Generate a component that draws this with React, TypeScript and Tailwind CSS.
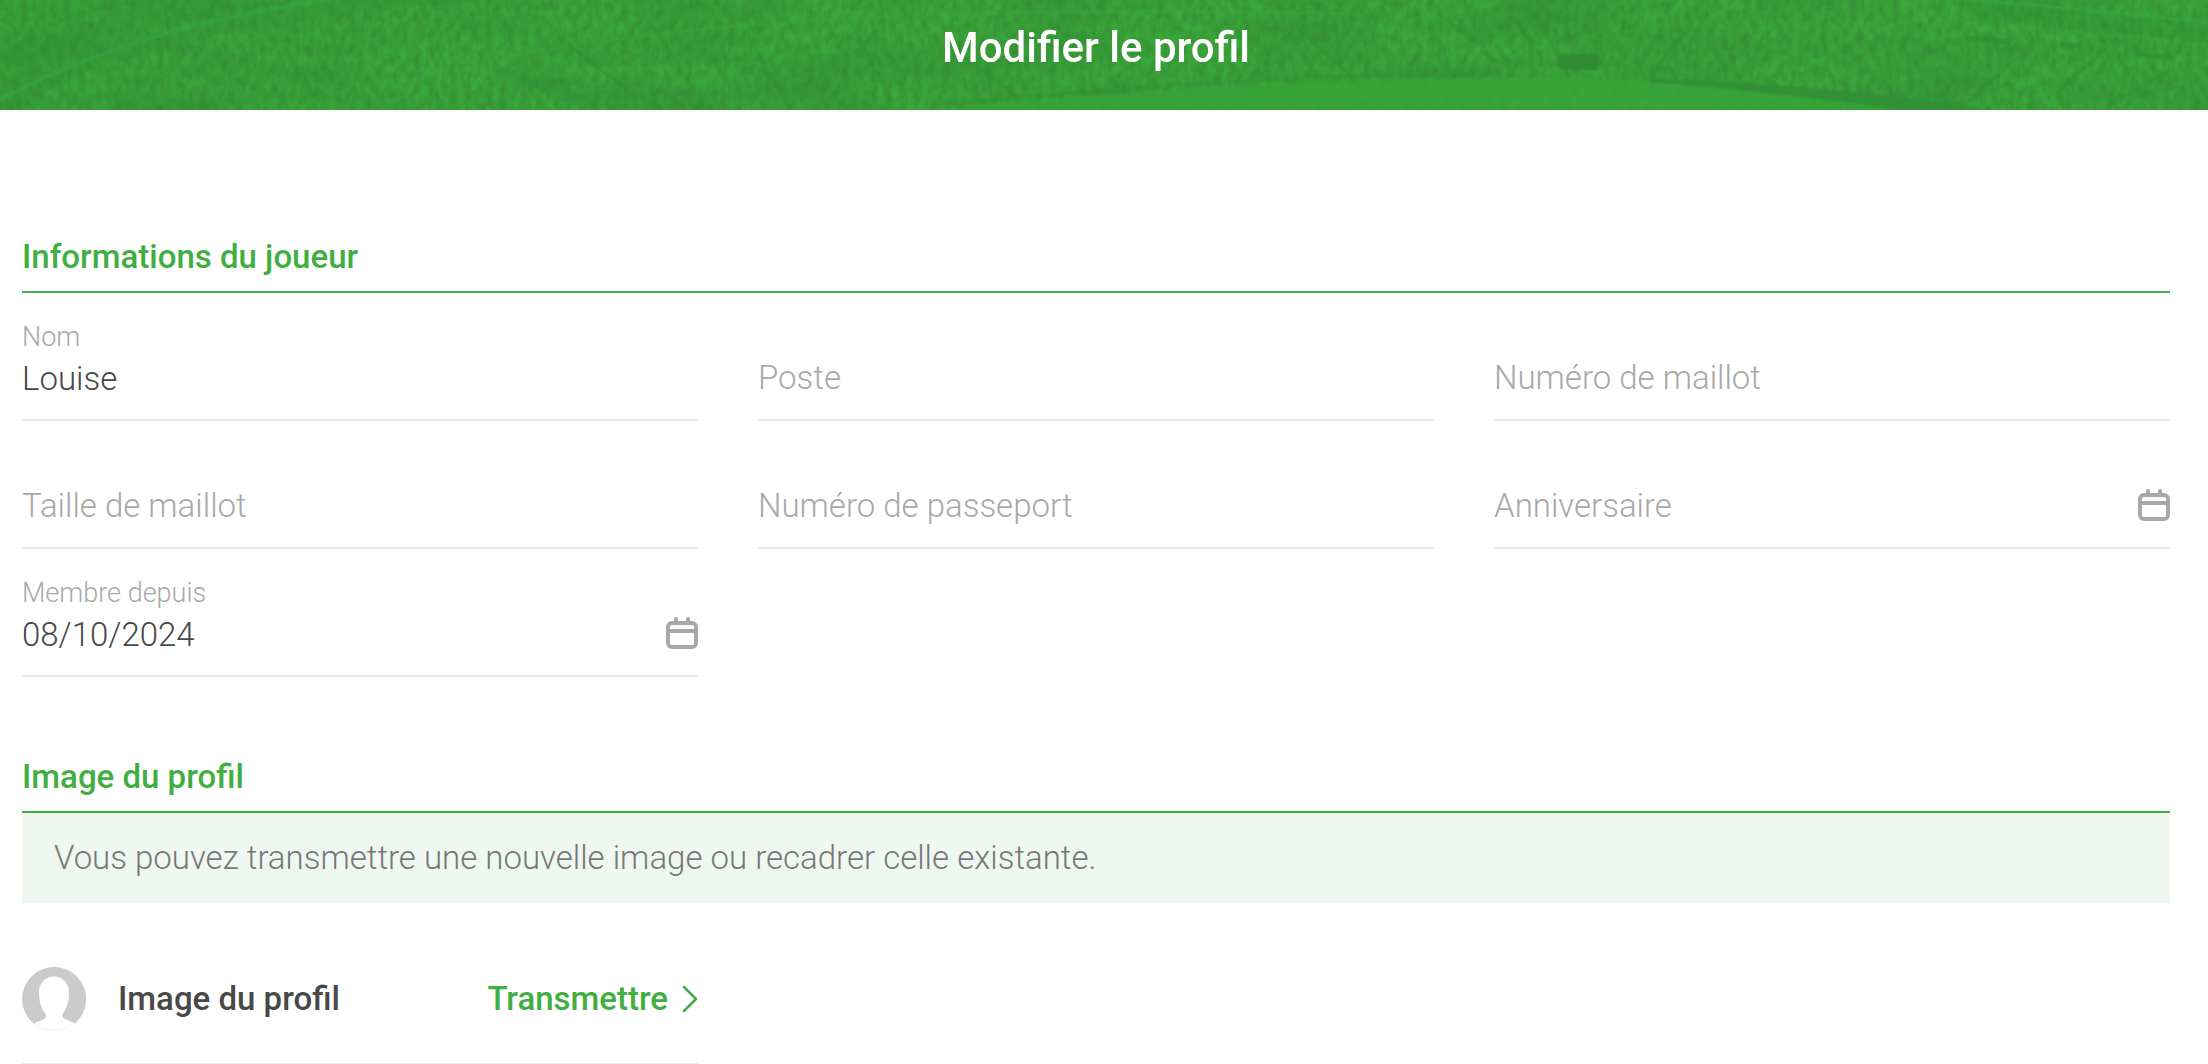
import { useState, type ReactNode } from 'react';

const textFields = [
  { id: 'nom', label: 'Nom', value: 'Louise' },
  { id: 'poste', label: 'Poste', value: '' },
  { id: 'numero', label: 'Numéro de maillot', value: '' },
  { id: 'taille', label: 'Taille de maillot', value: '' },
  { id: 'passeport', label: 'Numéro de passeport', value: '' },
  { id: 'anniversaire', label: 'Anniversaire', value: '', date: true },
  { id: 'membre', label: 'Membre depuis', value: '08/10/2024', date: true },
];

function CalendarIcon() {
  return (
    <svg viewBox="0 0 32 32" className="size-8" fill="none" stroke="currentColor" strokeWidth="4" aria-hidden="true">
      <rect x="2" y="6" width="28" height="24" rx="4" />
      <path d="M2 14h28" />
      <path d="M10 6V2M22 6V2" strokeLinecap="round" />
    </svg>
  );
}

function Avatar() {
  return (
    <svg viewBox="0 0 64 64" className="size-16 shrink-0" aria-hidden="true">
      <circle cx="32" cy="32" r="31.5" fill="#fff" stroke="#f1f1f1" />
      <path
        fill="#cbcbcb"
        d="M11.500 56.500A32 32 0 1 1 53 56.300L42 51.500C40 50.500 40 48 41.500 45.500C45.500 40 47 33 47 25C47 16 40.500 9.500 32 9.500S17 16 17 25C17 33 18.500 40 22.500 45.500C24.500 48 24.500 50.500 22.500 51.700Z"
      />
    </svg>
  );
}

// Stadium stands and pitch behind the page title
function StadiumBackground() {
  return (
    <svg viewBox="0 0 2208 110" preserveAspectRatio="xMidYMax slice" className="absolute inset-0 size-full" aria-hidden="true">
      <defs>
        <filter id="crowd" x="0" y="0" width="100%" height="100%" colorInterpolationFilters="sRGB">
          <feTurbulence type="fractalNoise" baseFrequency="0.14 0.09" numOctaves="2" seed="4" />
          <feColorMatrix values="0 0 0 0 0.2  0 0 0 0 0.53  0 0 0 0 0.2  1.4 0 0 0 -0.42" />
        </filter>
        <filter id="patches" x="0" y="0" width="100%" height="100%" colorInterpolationFilters="sRGB">
          <feTurbulence type="fractalNoise" baseFrequency="0.008 0.025" numOctaves="2" seed="9" />
          <feColorMatrix values="0 0 0 0 0.2  0 0 0 0 0.55  0 0 0 0 0.2  1.3 0 0 0 -0.5" />
        </filter>
        <filter id="soft" x="-5%" y="-20%" width="110%" height="140%" colorInterpolationFilters="sRGB">
          <feGaussianBlur stdDeviation="1.2" />
        </filter>
      </defs>
      <rect width="2208" height="110" fill="#3aa83a" />
      <rect width="2208" height="110" filter="url(#patches)" />
      <rect width="2208" height="110" filter="url(#crowd)" />
      <g fill="none" filter="url(#soft)">
        <path d="M0 110V92Q140 28 330 0H480Q240 20 90 70Q40 90 20 110Z" fill="#2f8a31" opacity="0.25" />
        <path d="M0 88Q130 22 290 0H0Z" fill="#2f8a31" opacity="0.2" />
        <path d="M0 100Q130 28 330 0" stroke="#34a540" strokeWidth="4" opacity="0.8" />
        <path d="M500 58Q790 0 1360 14" stroke="#3aa53b" strokeWidth="3" opacity="0.5" />
        <path d="M560 38L640 100M650 20L705 110M745 30L790 110M850 20L890 100M955 50L1015 95M1110 78L1120 92M1300 30L1350 75M1440 15L1480 45" stroke="#2f8a31" strokeWidth="2" opacity="0.6" />
        <path d="M500 68Q560 85 600 102H560Z" fill="#329238" opacity="0.5" />
        <path d="M930 110Q1240 78 1545 77Q1720 80 1950 110Z" fill="#37a437" opacity="0.8" />
        <path d="M930 106Q1240 74 1500 73" stroke="#318f33" strokeWidth="3" opacity="0.5" />
        <path d="M1650 79Q1830 84 1990 110H1900Q1780 92 1650 82Z" fill="#318f34" opacity="0.9" />
        <path d="M1559 54H1598V70H1559Z" fill="#308c33" />
        <path d="M1558 32V66M1601 32V66M1515 20L1542 58M1480 50L1505 66M1690 28L1652 72M1735 58L1705 80M2020 55L1965 105M2115 40L2055 95M2170 70L2110 104" stroke="#2f8a31" strokeWidth="2" opacity="0.6" />
        <path d="M1965 38L2010 42M2060 45L2080 46M2135 54L2175 58" stroke="#308b32" strokeWidth="5" opacity="0.7" />
        <path d="M1960 0L2208 24V42L1980 20Z" fill="#2f8b32" opacity="0.35" />
        <path d="M1970 0Q2090 10 2208 22" stroke="#36a541" strokeWidth="3" opacity="0.8" />
      </g>
    </svg>
  );
}

function SectionTitle({ children }: { children: ReactNode }) {
  return <h2 className="border-b-2 border-[#40ae41] pb-3 text-[33px] leading-[44px] font-medium text-[#40ae41]">{children}</h2>;
}

type FieldProps = { id: string; label: string; value: string; date?: boolean };

function Field({ id, label, value: initial, date }: FieldProps) {
  const [value, setValue] = useState(initial);

  return (
    <div className="relative flex h-32 items-end border-b-2 border-[#e9e9e9] pb-4">
      <label
        htmlFor={id}
        className={value ? 'absolute top-6 left-0 text-[27px] leading-10 text-[#a8a8a8]' : 'pointer-events-none absolute bottom-4 left-0 leading-[50px] text-[#a8a8a8]'}
      >
        {label}
      </label>
      <input id={id} type="text" value={value} onChange={(e) => setValue(e.target.value)} className="h-[50px] min-w-0 flex-1 bg-transparent outline-none" />
      {date && (
        <button type="button" aria-label={label} className="mb-[10px] text-[#a8a8a8]">
          <CalendarIcon />
        </button>
      )}
    </div>
  );
}

export default function App() {
  return (
    <div className="min-h-screen bg-white font-[Roboto,sans-serif] text-[33px] font-light text-[#484848]">
      <header className="relative overflow-hidden bg-[#389d38] pr-[38px] pl-[22px]">
        <StadiumBackground />
        <h1 className="relative pt-4 pb-[30px] text-center text-[42px] leading-[64px] font-medium text-white">Modifier le profil</h1>
      </header>

      <main className="pt-[125px] pr-[38px] pl-[22px]">
        <section>
          <SectionTitle>Informations du joueur</SectionTitle>
          <div className="grid grid-cols-3 gap-x-[60px]">
            {textFields.map((field) => (
              <Field key={field.id} {...field} />
            ))}
          </div>
        </section>

        <section className="pt-[78px]">
          <SectionTitle>Image du profil</SectionTitle>
          <p className="bg-[#eff8f0] px-8 py-5 leading-[50px] text-[#777]">Vous pouvez transmettre une nouvelle image ou recadrer celle existante.</p>
          <div className="mt-8 grid grid-cols-3 gap-x-[60px]">
            <div className="flex h-[130px] items-center gap-8 border-b-2 border-[#e9e9e9] font-medium">
              <Avatar />
              <span className="flex-1">Image du profil</span>
              <button type="button" className="flex items-center gap-[14px] text-[#40ae41]">
                Transmettre
                <svg viewBox="0 0 16 28" className="h-7 w-4" fill="none" stroke="currentColor" strokeWidth="2.5" strokeLinecap="round" strokeLinejoin="round" aria-hidden="true">
                  <path d="M2 2l12 12L2 26" />
                </svg>
              </button>
            </div>
          </div>
        </section>
      </main>
    </div>
  );
}
